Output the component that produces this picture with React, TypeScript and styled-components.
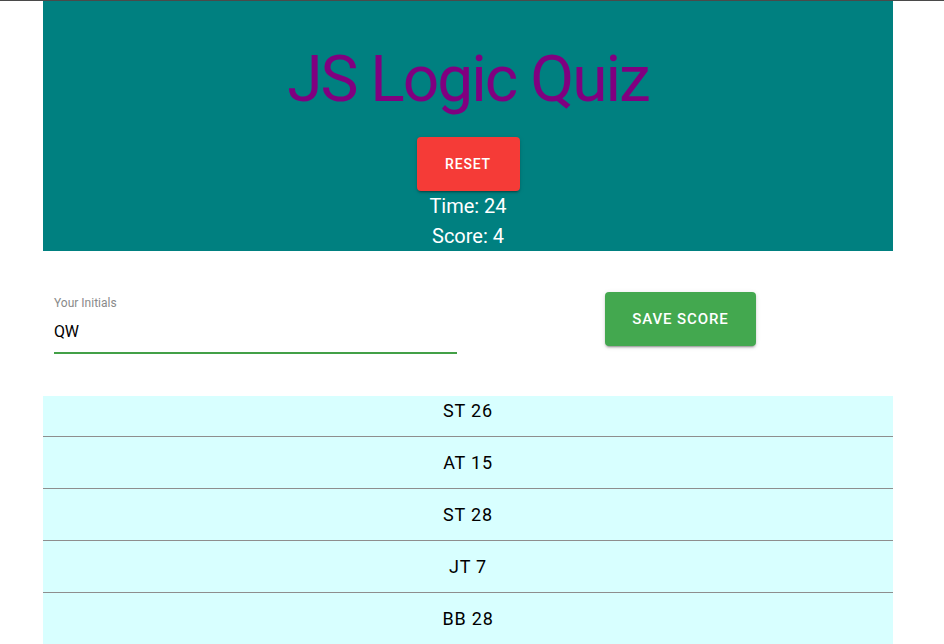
import React from "react";
import styled, { createGlobalStyle } from "styled-components";

const GlobalStyle = createGlobalStyle`
  html { scrollbar-width: none; }
  html::-webkit-scrollbar { display: none; }
  body {
    margin: 0;
    border-top: 1px solid #4a4a4a;
    font-family: Roboto, "Liberation Sans", sans-serif;
    background: #fff;
  }
`;

const Page = styled.div`
  width: 850px;
  margin-left: 43px;
`;

const Header = styled.header`
  background: #008080;
  padding-top: 41px;
  display: flex;
  flex-direction: column;
  align-items: center;
`;

const Title = styled.h1`
  margin: 0 0 19px;
  font-size: 64px;
  line-height: 76px;
  font-weight: 400;
  letter-spacing: -2px;
  color: #800080;
`;

const Button = styled.button<{ $bg: string; $size: number; $w: number }>`
  width: ${(p) => p.$w}px;
  height: 54px;
  border: none;
  border-radius: 4px;
  background: ${(p) => p.$bg};
  color: #fff;
  font-family: Roboto, "Liberation Sans", sans-serif;
  font-size: ${(p) => p.$size}px;
  font-weight: 500;
  letter-spacing: 0.06em;
  text-transform: uppercase;
  box-shadow: 0px 3px 1px -2px rgba(0, 0, 0, 0.2),
    0px 2px 2px 0px rgba(0, 0, 0, 0.14), 0px 1px 5px 0px rgba(0, 0, 0, 0.12);
  cursor: pointer;
`;

const Stat = styled.div`
  font-size: 20px;
  line-height: 30px;
  color: #fff;
`;

const FormRow = styled.section`
  display: grid;
  grid-template-columns: 1fr 1fr;
  padding: 41px 0 42px;
`;

const Field = styled.label`
  display: flex;
  flex-direction: column;
  margin: 0 11px;
  padding-top: 3px;
`;

const FieldLabel = styled.span`
  font-size: 12px;
  line-height: 16px;
  color: #8a8a8a;
  margin-bottom: 8px;
`;

const FieldInput = styled.input`
  border: none;
  border-bottom: 2px solid #43a047;
  outline: none;
  padding: 0 0 9px;
  margin: 0;
  font-family: Roboto, "Liberation Sans", sans-serif;
  font-size: 16px;
  line-height: 24px;
  height: 35px;
  box-sizing: border-box;
  color: #000;
  background: transparent;
`;

const ButtonCell = styled.div`
  display: flex;
  justify-content: center;
  align-items: flex-start;
`;

const List = styled.ul`
  list-style: none;
  margin: 0;
  padding: 0;
  background: #d8ffff;
`;

const Row = styled.li`
  padding: 12px 0;
  border-bottom: 1px solid #8e8e8e;
  font-size: 18px;
  line-height: 27px;
  letter-spacing: 0.8px;
  text-align: center;
  color: #000;

  &:first-child {
    padding-top: 1px;
  }
`;

const scores = ["ST 26", "AT 15", "ST 28", "JT 7", "BB 28"];

export default function App() {
  return (
    <>
      <GlobalStyle />
      <Page>
        <Header>
          <Title>JS Logic Quiz</Title>
          <Button $bg="#f53b37" $size={14} $w={103}>
            Reset
          </Button>
          <Stat>Time: 24</Stat>
          <Stat>Score: 4</Stat>
        </Header>
        <FormRow>
          <Field>
            <FieldLabel>Your Initials</FieldLabel>
            <FieldInput defaultValue="QW" />
          </Field>
          <ButtonCell>
            <Button $bg="#43a84f" $size={15} $w={151}>
              Save Score
            </Button>
          </ButtonCell>
        </FormRow>
        <List>
          {scores.map((s, i) => (
            <Row key={i}>{s}</Row>
          ))}
        </List>
      </Page>
    </>
  );
}
